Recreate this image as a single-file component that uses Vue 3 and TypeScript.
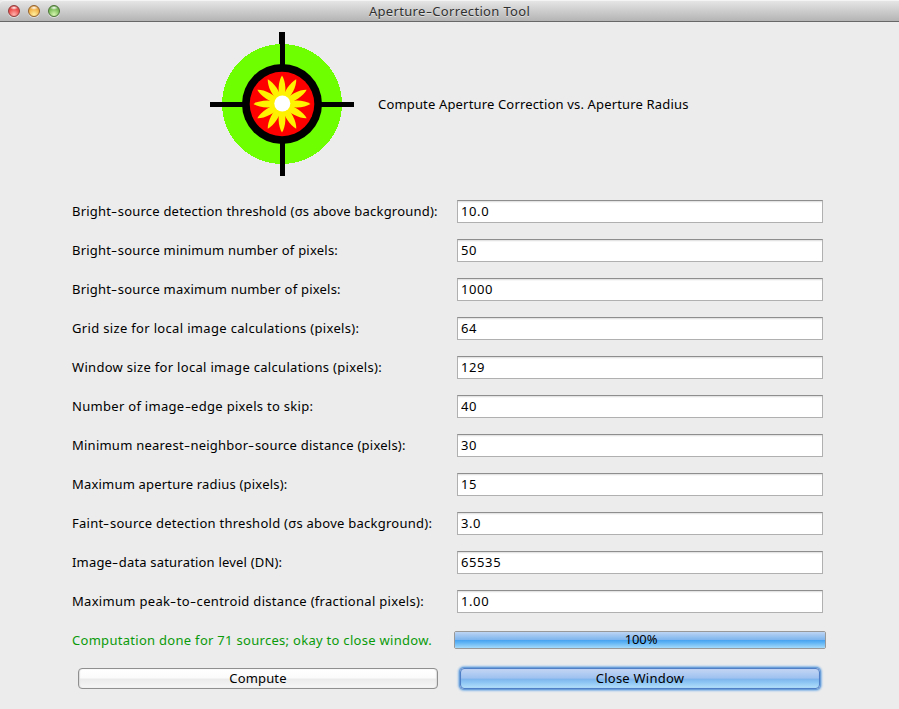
<script setup lang="ts">
import { ref } from 'vue'

interface Field {
  label: string
  value: string
  spacing: number
}

const fields = ref<Field[]>([
  { label: 'Bright-source detection threshold (σs above background):', value: '10.0', spacing: 0.21 },
  { label: 'Bright-source minimum number of pixels:', value: '50', spacing: 0.22 },
  { label: 'Bright-source maximum number of pixels:', value: '1000', spacing: 0.22 },
  { label: 'Grid size for local image calculations (pixels):', value: '64', spacing: 0.33 },
  { label: 'Window size for local image calculations (pixels):', value: '129', spacing: 0.306 },
  { label: 'Number of image-edge pixels to skip:', value: '40', spacing: 0.3 },
  { label: 'Minimum nearest-neighbor-source distance (pixels):', value: '30', spacing: 0.237 },
  { label: 'Maximum aperture radius (pixels):', value: '15', spacing: 0.19 },
  { label: 'Faint-source detection threshold (σs above background):', value: '3.0', spacing: 0.255 },
  { label: 'Image-data saturation level (DN):', value: '65535', spacing: 0.19 },
  { label: 'Maximum peak-to-centroid distance (fractional pixels):', value: '1.00', spacing: 0.304 },
])

const petals = Array.from({ length: 12 }, (_, i) => i * 30)
const progress = ref(100)

// Splits a caption so that its hyphens can be drawn wider than the font's own.
const parts = (text: string): string[] => text.split(/(-)/)
</script>

<template>
  <div class="window">
    <header class="titlebar">
      <div class="lights">
        <i class="light red"></i>
        <i class="light amber"></i>
        <i class="light green"></i>
      </div>
      <h1 class="title"><span v-for="(p, i) in parts('Aperture-Correction Tool')" :key="i" :class="{ hyphen: p === '-' }">{{ p }}</span></h1>
    </header>

    <section class="intro">
      <svg class="logo" width="144" height="144" viewBox="0 0 144 144">
        <circle cx="72" cy="72" r="60" fill="#6eff00" shape-rendering="crispEdges" />
        <path d="M0 70h144v5H0zM69 0h6v12h-6zM70 12h5v132h-5z" fill="#000" />
        <circle cx="72" cy="72" r="40" fill="#000" />
        <circle cx="72" cy="72" r="32.3" fill="#f00" />
        <path
          v-for="angle in petals"
          :key="angle"
          d="M72 72C66.5 61 68.5 49 72 43.5C75.5 49 77.5 61 72 72Z"
          fill="#fff200"
          :transform="`rotate(${angle} 72 72)`"
        />
        <circle cx="72.3" cy="71.5" r="8" fill="#fff" />
      </svg>
      <p class="heading">Compute Aperture Correction vs. Aperture Radius</p>
    </section>

    <form class="form" @submit.prevent>
      <template v-for="(f, n) in fields" :key="f.label">
        <label class="label" :for="`field-${n}`" :style="{ letterSpacing: f.spacing + 'px' }"><span v-for="(p, i) in parts(f.label)" :key="i" :class="{ hyphen: p === '-' }">{{ p }}</span></label>
        <input :id="`field-${n}`" v-model="f.value" class="field" type="text" />
      </template>
    </form>

    <div class="status">
      <p class="message">Computation done for 71 sources; okay to close window.</p>
      <div class="progress">
        <div class="bar" :style="{ width: progress + '%' }"></div>
        <span class="percent">{{ progress }}%</span>
      </div>
    </div>

    <footer class="actions">
      <button class="button" type="button">Compute</button>
      <button class="button primary" type="button">Close Window</button>
    </footer>
  </div>
</template>

<style>
body {
  background: #ececec;
}
</style>

<style scoped>
.window {
  width: 899px;
  height: 709px;
  overflow: hidden;
  box-sizing: border-box;
  background: #ececec;
  color: #000;
  font: 13px/18px 'Noto Sans', sans-serif;
}
.titlebar {
  display: grid;
  grid-template-columns: 100px 1fr 100px;
  align-items: center;
  height: 22px;
  box-sizing: border-box;
  border-top: 1px solid #f4f4f4;
  border-bottom: 1px solid #686868;
  border-radius: 4px 0 0 0;
  background: linear-gradient(#e5e5e5, #b4b4b4);
}
.lights {
  display: flex;
  gap: 8px;
  padding-left: 8px;
}
.light {
  width: 12px;
  height: 12px;
  box-sizing: border-box;
  border-radius: 50%;
  box-shadow: 0 1px 0 rgba(255, 255, 255, 0.5);
}
.red {
  border: 1px solid #923c3a;
  background: radial-gradient(ellipse 4px 2px at 50% 18%, #fff 0, rgba(255, 255, 255, 0) 100%), radial-gradient(circle at 50% 85%, #ffb3ae, #ee5350 55%, #c93735);
}
.amber {
  border: 1px solid #94622c;
  background: radial-gradient(ellipse 4px 2px at 50% 18%, #fff 0, rgba(255, 255, 255, 0) 100%), radial-gradient(circle at 50% 85%, #fff0a0, #f3b64e 55%, #cc8430);
}
.green {
  border: 1px solid #4b7436;
  background: radial-gradient(ellipse 4px 2px at 50% 18%, #fff 0, rgba(255, 255, 255, 0) 100%), radial-gradient(circle at 50% 85%, #d6f5b0, #82c160 55%, #53913b);
}
.title {
  margin: 0;
  color: #303030;
  font-size: 13px;
  font-weight: 400;
  line-height: 20px;
  letter-spacing: 0.33px;
  text-align: center;
  text-shadow: 0 1px 0 rgba(255, 255, 255, 0.5);
}
.hyphen {
  display: inline-block;
  width: 6.6px;
  text-align: left;
  transform: scaleX(1.45);
  transform-origin: left;
}
.intro {
  display: flex;
  align-items: center;
  gap: 24px;
  height: 144px;
  padding: 10px 0 24px 210px;
}
.logo {
  flex: none;
}
.heading {
  margin: 0;
  letter-spacing: 0.163px;
}
.form {
  display: grid;
  grid-template-columns: 385px 366px;
  grid-auto-rows: 23px;
  row-gap: 16px;
  align-items: center;
  padding-left: 72px;
}
.label {
  padding-bottom: 2px;
  white-space: nowrap;
}
.field {
  width: 366px;
  height: 23px;
  box-sizing: border-box;
  margin: 0;
  padding: 0 3px 2px;
  border: 1px solid #b0b0b0;
  border-top-color: #8e8e8e;
  border-radius: 0;
  outline: none;
  background: #fff;
  box-shadow: inset 0 1px 0 #e4e4e4, inset 0 2px 0 #f7f7f7;
  color: #000;
  font: inherit;
  letter-spacing: 0.6px;
}
.status {
  display: grid;
  grid-template-columns: 382px 372px;
  align-items: center;
  height: 18px;
  padding: 18px 0 0 72px;
}
.message {
  margin: 0;
  color: #0a9a0a;
  letter-spacing: 0.29px;
  white-space: nowrap;
}
.progress {
  display: grid;
  height: 18px;
  box-sizing: border-box;
  border: 1px solid #999;
  border-radius: 2px;
  overflow: hidden;
  background: #fff;
}
.bar,
.percent {
  grid-area: 1 / 1;
}
.bar {
  height: 16px;
  background: linear-gradient(#bcd5f4 0, #7fb5ee 49%, #46a1ee 50%, #5cb2f5 65%, #a5dafa 100%);
}
.percent {
  padding-left: 2px;
  line-height: 14px;
  letter-spacing: -0.1px;
  text-align: center;
}
.actions {
  display: flex;
  gap: 22px;
  padding: 19px 0 0 78px;
}
.button {
  width: 360px;
  height: 21px;
  box-sizing: border-box;
  margin: 0;
  padding: 0 0 1px;
  border: 1px solid #8f8f8f;
  border-radius: 4px;
  background: linear-gradient(#fff 0, #fbfbfb 45%, #ebebeb 55%, #f6f6f6 100%);
  box-shadow: inset 1px 0 1px #ddd, inset -1px 0 1px #ddd;
  color: #000;
  font: inherit;
  line-height: 18px;
  letter-spacing: 0.15px;
}
.primary {
  border-color: #4f7fc6;
  background: linear-gradient(#c4d6f4 0, #9dc1f0 49%, #7db4ec 52%, #8cc5f4 70%, #b4e0fa 100%);
  box-shadow: 0 0 0 1px #6c9ed8, 0 0 2px 2px #8ab8e6, inset 0 0 1px #7ba3dc;
  letter-spacing: 0.23px;
}
</style>
